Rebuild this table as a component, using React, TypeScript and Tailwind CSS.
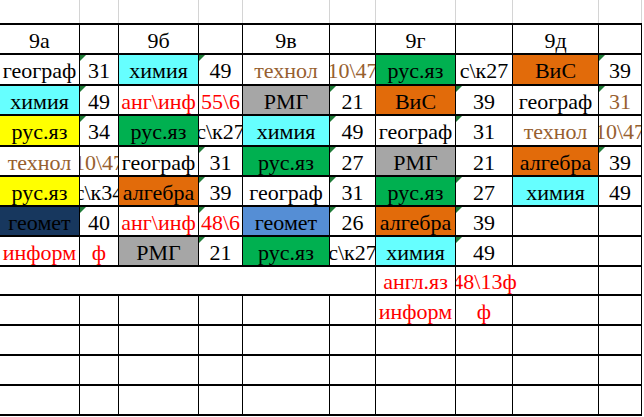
import React from 'react';

type Cell = { t?: string; bg?: string; c?: string; tri?: boolean };

const COLS = 'grid grid-cols-[80px_39px_80px_44px_87px_46px_80px_57px_86px_43px]';

const BG: Record<string, string> = {
  cy: 'bg-[#66ffff]',
  gr: 'bg-[#00b050]',
  or: 'bg-[#e26b0a]',
  gy: 'bg-[#a6a6a6]',
  ye: 'bg-[#ffff00]',
  nv: 'bg-[#17375e]',
  bl: 'bg-[#558ed5]',
};

const TC: Record<string, string> = {
  rd: 'text-[#ff0000]',
  br: 'text-[#97602f]',
};

const ROWS: { h: string; cells: Cell[] }[] = [
  {
    h: 'h-[31px]',
    cells: [
      { t: 'географ' }, { t: '31', tri: true }, { t: 'химия', bg: 'cy' }, { t: '49', tri: true },
      { t: 'технол', c: 'br' }, { t: '10\\47', c: 'br' }, { t: 'рус.яз', bg: 'gr' }, { t: 'с\\к27' },
      { t: 'ВиС', bg: 'or' }, { t: '39', tri: true },
    ],
  },
  {
    h: 'h-[30px]',
    cells: [
      { t: 'химия', bg: 'cy' }, { t: '49', tri: true }, { t: 'анг\\инф', c: 'rd' }, { t: '55\\6', c: 'rd' },
      { t: 'РМГ', bg: 'gy' }, { t: '21', tri: true }, { t: 'ВиС', bg: 'or' }, { t: '39', tri: true },
      { t: 'географ' }, { t: '31', c: 'br', tri: true },
    ],
  },
  {
    h: 'h-[31px]',
    cells: [
      { t: 'рус.яз', bg: 'ye' }, { t: '34', tri: true }, { t: 'рус.яз', bg: 'gr' }, { t: 'с\\к27' },
      { t: 'химия', bg: 'cy' }, { t: '49', tri: true }, { t: 'географ' }, { t: '31', tri: true },
      { t: 'технол', c: 'br' }, { t: '10\\47', c: 'br' },
    ],
  },
  {
    h: 'h-[30px]',
    cells: [
      { t: 'технол', c: 'br' }, { t: '10\\47', c: 'br' }, { t: 'географ' }, { t: '31', tri: true },
      { t: 'рус.яз', bg: 'gr' }, { t: '27', tri: true }, { t: 'РМГ', bg: 'gy' }, { t: '21' },
      { t: 'алгебра', bg: 'or' }, { t: '39', tri: true },
    ],
  },
  {
    h: 'h-[30px]',
    cells: [
      { t: 'рус.яз', bg: 'ye' }, { t: 'с\\к34' }, { t: 'алгебра', bg: 'or' }, { t: '39', tri: true },
      { t: 'географ' }, { t: '31', tri: true }, { t: 'рус.яз', bg: 'gr' }, { t: '27', tri: true },
      { t: 'химия', bg: 'cy' }, { t: '49' },
    ],
  },
  {
    h: 'h-[30px]',
    cells: [
      { t: 'геомет', bg: 'nv' }, { t: '40', tri: true }, { t: 'анг\\инф', c: 'rd' }, { t: '48\\6', c: 'rd', tri: true },
      { t: 'геомет', bg: 'bl' }, { t: '26', tri: true }, { t: 'алгебра', bg: 'or' }, { t: '39', tri: true },
      {}, {},
    ],
  },
  {
    h: 'h-[30px]',
    cells: [
      { t: 'информ', c: 'rd' }, { t: 'ф', c: 'rd' }, { t: 'РМГ', bg: 'gy' }, { t: '21', tri: true },
      { t: 'рус.яз', bg: 'gr' }, { t: 'с\\к27' }, { t: 'химия', bg: 'cy' }, { t: '49', tri: true },
      {}, {},
    ],
  },
];

const CELL =
  'relative flex items-center justify-center overflow-hidden whitespace-nowrap pt-[3px] border-r border-b-2 border-black';

function Tri() {
  return (
    <svg className="absolute left-0 top-0" width="6" height="6" viewBox="0 0 6 6">
      <polygon points="0,0 6,0 0,6" fill="#1e7a36" />
    </svg>
  );
}

function C({ cell }: { cell: Cell }) {
  return (
    <div className={`${CELL} ${cell.bg ? BG[cell.bg] : 'bg-white'} ${cell.c ? TC[cell.c] : 'text-black'}`}>
      {cell.tri && <Tri />}
      {cell.t}
    </div>
  );
}

const EMPTY10 = Array.from({ length: 10 });

export default function App() {
  return (
    <div className="h-[417px] w-[644px] overflow-hidden bg-white [font-family:'Liberation_Serif',serif] text-[22px] leading-none">
      {/* excel gridline strip */}
      <div className={`${COLS} h-[23px]`}>
        {EMPTY10.map((_, i) => (
          <div key={i} className="border-r border-[#d4d4d4]" />
        ))}
      </div>
      {/* header */}
      <div className={`${COLS} h-[32px] w-[642px] border-t-2 border-black`}>
        {['9а', '', '9б', '', '9в', '', '9г', '', '9д', ''].map((t, i) => (
          <div key={i} className={`${CELL} text-black`}>
            {t}
          </div>
        ))}
      </div>
      {ROWS.map((r, ri) => (
        <div key={ri} className={`${COLS} ${r.h}`}>
          {r.cells.map((cell, ci) => (
            <C key={ci} cell={cell} />
          ))}
        </div>
      ))}
      {/* row 8 */}
      <div className={`${COLS} h-[29px]`}>
        <div className="col-span-6 border-r border-b-2 border-black" />
        <div className={`${CELL} text-[#ff0000]`}>англ.яз</div>
        <div className="relative col-span-2 overflow-hidden border-r border-b-2 border-black">
          <div className="flex h-full w-[57px] items-center justify-center whitespace-nowrap pt-[3px] text-[#ff0000]">
            48\13ф
          </div>
        </div>
        <div className={CELL} />
      </div>
      {/* row 9 */}
      <div className={`${COLS} h-[30px]`}>
        {EMPTY10.map((_, i) => (
          <div key={i} className={`${CELL} text-[#ff0000]`}>
            {i === 6 ? 'информ' : i === 7 ? 'ф' : ''}
          </div>
        ))}
      </div>
      {[0, 1, 2].map((k) => (
        <div key={k} className={`${COLS} h-[30px]`}>
          {EMPTY10.map((_, i) => (
            <div key={i} className={CELL} />
          ))}
        </div>
      ))}
    </div>
  );
}
